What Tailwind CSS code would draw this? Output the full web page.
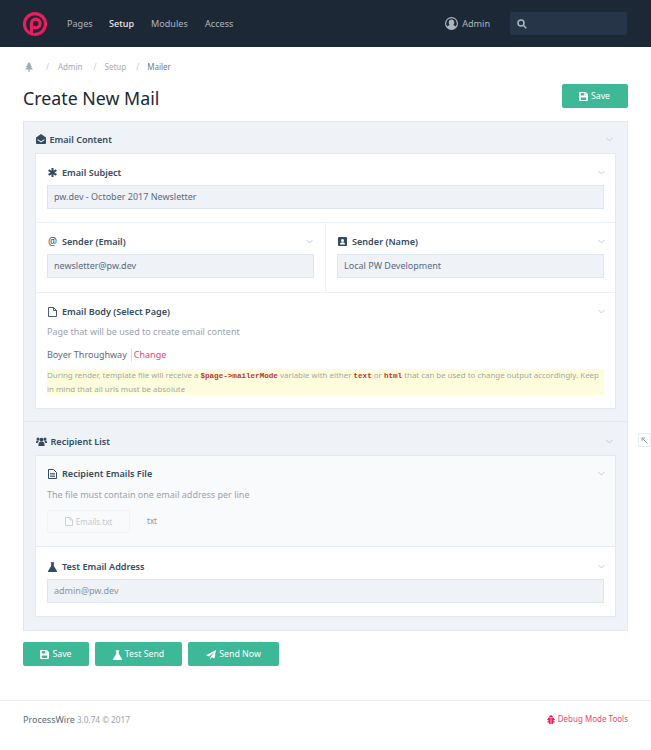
<!DOCTYPE html>
<html lang="en">
<head>
    <meta charset="UTF-8">
    <title>Create New Mail</title>
    <script src="https://cdn.jsdelivr.net/npm/@tailwindcss/browser@4"></script>
</head>
<body class="relative bg-white h-[750px] overflow-hidden font-['Noto_Sans',sans-serif] text-[9.100px] text-[#354b60]">
    <!-- top bar -->
    <header class="h-[47px] bg-[#1c2836] flex items-center pl-[23px] pr-[24px]">
        <svg class="w-[24px] h-[24px] mr-[20px]" viewBox="0 0 24 24" fill="none" stroke="#eb1d5d" stroke-width="3.200" stroke-linecap="round">
            <path d="M9.5 22.2C4.8 21 1.5 17 1.5 12.2 1.5 6.300 6.200 1.600 12 1.600s10.500 4.700 10.500 10.500c0 5.800-4.700 10.300-10.500 10.300"/>
            <path d="M8.500 20.500V11.500a4.300 4.300 0 1 1 4.300 4.300c-.6 0-1-.1-1.500-.3"/>
        </svg>
        <nav class="flex text-[#aeb5bf]">
            <span class="w-[42px]">Pages</span>
            <span class="w-[42px] text-[#e8eaed] font-medium">Setup</span>
            <span class="w-[54px]">Modules</span>
            <span>Access</span>
        </nav>
        <div class="ml-auto flex items-center gap-[4px] text-[#aeb5bf] mr-[20px]">
            <svg class="w-[13px] h-[13px]" viewBox="0 0 13 13" fill="#aeb5bf">
                <path fill-rule="evenodd" d="M6.500 0a6.500 6.500 0 1 0 0 13 6.500 6.500 0 0 0 0-13Zm0 1.200a5.300 5.300 0 0 1 4.300 8.400C10 8.600 8.800 8.200 8.200 8c.7-.6 1.100-1.500 1.100-2.500 0-1.700-1.200-3-2.800-3s-2.800 1.300-2.800 3c0 1 .4 1.900 1.100 2.500-.6.200-1.800.6-2.600 1.600a5.300 5.300 0 0 1 4.300-8.400Z"/>
            </svg>
            <span>Admin</span>
        </div>
        <div class="w-[117px] h-[23px] rounded-[2px] bg-[#263548] flex items-center pl-[7px]">
            <svg class="w-[10px] h-[10px]" viewBox="0 0 10 10" fill="none" stroke="#aeb5bf" stroke-width="1.500"><circle cx="4" cy="4" r="3"/><path d="M6.300 6.300 9.300 9.300"/></svg>
        </div>
    </header>

    <main class="px-[23px]">
        <!-- breadcrumb -->
        <div class="h-[37px] pt-[2px] flex items-center text-[8px] text-[#a4abb5]">
            <svg class="w-[8px] h-[10px] ml-[2px]" viewBox="0 0 8 10" fill="#a4abb5"><path d="M4 0 6 2.500H5.300L7 5H6L8 7.500H4.600V10H3.400V7.500H0L2 5H1L2.700 2.500H2Z"/></svg>
            <span class="ml-[13px] text-[#c3c8cf]">/</span>
            <span class="ml-[9px]">Admin</span>
            <span class="ml-[11px] text-[#c3c8cf]">/</span>
            <span class="ml-[8px]">Setup</span>
            <span class="ml-[10px] text-[#c3c8cf]">/</span>
            <span class="ml-[8px] text-[#6b7a8b]">Mailer</span>
        </div>

        <!-- title row -->
        <div class="h-[24px] flex items-center justify-between">
            <h1 class="text-[17.800px] leading-none text-[#1c2836] relative top-[3px]">Create New Mail</h1>
            <button class="w-[66px] h-[24px] pt-[1px] rounded-[2px] bg-[#3eb998] text-white flex items-center justify-center gap-[3px] text-[8.800px] mr-[0.500px]">
                <svg class="w-[9px] h-[9px]" viewBox="0 0 10 10" fill="#fff"><path fill-rule="evenodd" d="M1 0h6.500L10 2.500V9a1 1 0 0 1-1 1H1a1 1 0 0 1-1-1V1a1 1 0 0 1 1-1Zm1 1v3h5V1Zm3.500.5h1v2h-1ZM2 6v3h6V6Z"/></svg>
                Save
            </button>
        </div>

        <!-- form panel -->
        <div class="mt-[13px] h-[510px] bg-[#eff2f7] border border-[#e3e8f0]">
            <div class="h-[31px] px-[11px] flex items-center justify-between font-semibold text-[#354b60]">
                <span class="flex items-center gap-[4px] relative top-[2px] ml-[0.500px]">
                    <svg class="w-[10px] h-[10px]" viewBox="0 0 10 10" fill="#354b60"><path d="M5 0 0 3.600V9a1 1 0 0 0 1 1h8a1 1 0 0 0 1-1V3.600ZM1.800 5.200 5 7.300l3.200-2.100.5.700L5 8.400 1.300 5.900Z"/></svg>
                    Email Content
                </span>
                <svg class="w-[7px] h-[5px] mr-[3px] relative top-[2px]" viewBox="0 0 7 5" fill="none" stroke="#c5ccd6"><path d="m.5 1 3 3 3-3"/></svg>
            </div>

            <div class="mx-[11px] bg-white border border-[#e5e9f0] h-[256px]">
                <div class="h-[69px] px-[11px] pt-[12px] border-b border-[#eef1f6]">
                    <div class="flex items-center justify-between h-[13px] font-semibold">
                        <span class="flex items-center gap-[5px] ml-[1px]">
                            <svg class="w-[9px] h-[9px]" viewBox="0 0 9 9" fill="none" stroke="#354b60" stroke-width="2"><path d="M4.500 0v9M.6 2.200l7.800 4.600M8.400 2.200.6 6.800"/></svg>
                            Email Subject
                        </span>
                        <svg class="w-[7px] h-[5px] mr-[-1px]" viewBox="0 0 7 5" fill="none" stroke="#c5ccd6"><path d="m.5 1 3 3 3-3"/></svg>
                    </div>
                    <div class="mt-[6px] h-[24px] bg-[#eff2f7] border border-[#dfe5ee] px-[6px] flex items-center text-[#5b6b7c] text-[9px]">pw.dev - October 2017 Newsletter</div>
                </div>

                <div class="h-[70px] flex border-b border-[#eef1f6]">
                    <div class="w-[290px] border-r border-[#eef1f6] pl-[11px] pr-[11px] pt-[12px]">
                        <div class="flex items-center justify-between h-[13px] font-semibold">
                            <span class="flex items-center gap-[5px] ml-[1px]"><span class="text-[10px] font-normal">@</span>Sender (Email)</span>
                            <svg class="w-[7px] h-[5px] mr-[1px]" viewBox="0 0 7 5" fill="none" stroke="#c5ccd6"><path d="m.5 1 3 3 3-3"/></svg>
                        </div>
                        <div class="mt-[6px] h-[24px] bg-[#eff2f7] border border-[#dfe5ee] px-[6px] flex items-center text-[#5b6b7c] text-[9px]">newsletter@pw.dev</div>
                    </div>
                    <div class="flex-1 pl-[11px] pr-[11px] pt-[12px]">
                        <div class="flex items-center justify-between h-[13px] font-semibold">
                            <span class="flex items-center gap-[5px] ml-[1px]">
                                <svg class="w-[9px] h-[9px]" viewBox="0 0 9 9"><rect width="9" height="9" rx="1" fill="#354b60"/><circle cx="4.500" cy="3.400" r="1.500" fill="#fff"/><path d="M2 7.500c0-1.500 1-2.200 2.500-2.200S7 6 7 7.500Z" fill="#fff"/></svg>
                                Sender (Name)
                            </span>
                            <svg class="w-[7px] h-[5px] mr-[-1px]" viewBox="0 0 7 5" fill="none" stroke="#c5ccd6"><path d="m.5 1 3 3 3-3"/></svg>
                        </div>
                        <div class="mt-[6px] h-[24px] bg-[#eff2f7] border border-[#dfe5ee] px-[6px] flex items-center text-[#5b6b7c] text-[9px]">Local PW Development</div>
                    </div>
                </div>

                <div class="px-[11px] pt-[12px]">
                    <div class="flex items-center justify-between h-[13px] font-semibold">
                        <span class="flex items-center gap-[5px] ml-[1px]">
                            <svg class="w-[9px] h-[10px]" viewBox="0 0 9 10" fill="none" stroke="#354b60" stroke-width=".9"><path d="M.5.500h5l3 3v6h-8ZM5.500.500v3h3"/></svg>
                            Email Body (Select Page)
                        </span>
                        <svg class="w-[7px] h-[5px] mr-[-1px]" viewBox="0 0 7 5" fill="none" stroke="#c5ccd6"><path d="m.5 1 3 3 3-3"/></svg>
                    </div>
                    <p class="mt-[7px] text-[#9aa3ae] text-[9px] leading-[13px]">Page that will be used to create email content</p>
                    <div class="mt-[10px] h-[14px] flex items-center text-[9px] text-[#5b6b7c]">
                        <span>Boyer Throughway</span>
                        <span class="ml-[4px] pl-[2px] border-l border-[#d9dee6] text-[#f0426f] leading-[14px]">Change</span>
                    </div>
                    <div class="mt-[7px] h-[26px] bg-[#fdfdde] text-[#a3a89f] text-[7.900px] leading-[13px]">
                        During render, template file will receive a <code class="font-['Liberation_Mono',monospace] font-bold text-[#c0342f] text-[7.600px]">$page->mailerMode</code> variable with either <code class="font-['Liberation_Mono',monospace] font-bold text-[#c0342f] text-[7.600px]">text</code> or <code class="font-['Liberation_Mono',monospace] font-bold text-[#c0342f] text-[7.600px]">html</code> that can be used to change output accordingly. Keep in mind that all urls must be absolute
                    </div>
                </div>
            </div>

            <!-- recipient list -->
            <div class="mt-[12px] border-t border-[#e3e8f0] h-[34px] pt-[6px] px-[11px] flex items-center justify-between font-semibold">
                <span class="flex items-center gap-[4px] ml-[0.500px]">
                    <svg class="w-[11px] h-[9px]" viewBox="0 0 11 9" fill="#354b60"><circle cx="5.500" cy="2.800" r="2"/><circle cx="2" cy="2" r="1.500"/><circle cx="9" cy="2" r="1.500"/><path d="M2.500 9V7c0-1.500 1-2.200 3-2.200s3 .7 3 2.200v2ZM0 6V5c0-.8.6-1.500 2-1.500.4 0 .7.200 1 .5C2.200 4.500 1.700 5.200 1.600 6ZM11 6V5c0-.8-.6-1.500-2-1.500-.4 0-.7.200-1 .5.800.5 1.300 1.200 1.400 2Z"/></svg>
                    Recipient List
                </span>
                <svg class="w-[7px] h-[5px] mr-[3px]" viewBox="0 0 7 5" fill="none" stroke="#c5ccd6"><path d="m.5 1 3 3 3-3"/></svg>
            </div>

            <div class="mx-[11px] border border-[#e5e9f0] bg-white h-[162px]">
                <div class="h-[91px] bg-[#f9fafc] border-b border-[#e5e9f0] px-[11px] pt-[11px]">
                    <div class="flex items-center justify-between h-[13px] font-semibold">
                        <span class="flex items-center gap-[5px] ml-[1px]">
                            <svg class="w-[9px] h-[10px]" viewBox="0 0 9 10" fill="none" stroke="#354b60"><path d="M.5.500h5l3 3v6h-8Z"/><path d="M2 4.500h5M2 6h5M2 7.500h5" stroke-width=".8"/></svg>
                            Recipient Emails File
                        </span>
                        <svg class="w-[7px] h-[5px] mr-[-1px]" viewBox="0 0 7 5" fill="none" stroke="#c5ccd6"><path d="m.5 1 3 3 3-3"/></svg>
                    </div>
                    <p class="mt-[8px] text-[#9aa3ae] text-[9px] leading-[13px]">The file must contain one email address per line</p>
                    <div class="mt-[9px] flex items-center">
                        <div class="w-[83px] h-[23px] border border-[#f1f3f6] rounded-[2px] flex items-center justify-center gap-[3px] text-[#c3c8ce] text-[8px]">
                            <svg class="w-[8px] h-[9px]" viewBox="0 0 8 9" fill="none" stroke="#c3c8ce" stroke-width=".8"><path d="M.5.500h4.500l2.500 2.500v5.500h-7Z"/><path d="M5 .500v2.500h2.500"/></svg>
                            Emails.txt
                        </div>
                        <span class="ml-[17px] text-[#8a95a2] text-[8px] relative top-[-1px]">txt</span>
                    </div>
                </div>
                <div class="px-[11px] pt-[13px]">
                    <div class="flex items-center justify-between h-[13px] font-semibold">
                        <span class="flex items-center gap-[5px] ml-[1px]">
                            <svg class="w-[9px] h-[10px]" viewBox="0 0 9 10" fill="#354b60"><path d="M2.800.300h3.400v1H5.800v2.500L9 9.200a.5.500 0 0 1-.4.800H.4A.5.500 0 0 1 0 9.200l3.200-5.400V1.300h-.4Z"/></svg>
                            Test Email Address
                        </span>
                        <svg class="w-[7px] h-[5px] mr-[-1px]" viewBox="0 0 7 5" fill="none" stroke="#c5ccd6"><path d="m.5 1 3 3 3-3"/></svg>
                    </div>
                    <div class="mt-[6px] h-[24px] bg-[#eff2f7] border border-[#dfe5ee] px-[6px] flex items-center text-[#8a95a2] text-[9px]">admin@pw.dev</div>
                </div>
            </div>
        </div>

        <!-- actions -->
        <div class="mt-[11px] flex gap-[6px] text-white text-[8.800px]">
            <button class="w-[66px] h-[24px] pt-[1px] rounded-[2px] bg-[#3eb998] flex items-center justify-center gap-[3px]">
                <svg class="w-[9px] h-[9px]" viewBox="0 0 10 10" fill="#fff"><path fill-rule="evenodd" d="M1 0h6.500L10 2.500V9a1 1 0 0 1-1 1H1a1 1 0 0 1-1-1V1a1 1 0 0 1 1-1Zm1 1v3h5V1Zm3.500.5h1v2h-1ZM2 6v3h6V6Z"/></svg>
                Save
            </button>
            <button class="w-[87px] h-[24px] pt-[1px] rounded-[2px] bg-[#3eb998] flex items-center justify-center gap-[3px]">
                <svg class="w-[9px] h-[10px]" viewBox="0 0 9 10" fill="#fff"><path d="M2.800.300h3.400v1H5.800v2.500L9 9.200a.5.500 0 0 1-.4.800H.4A.5.500 0 0 1 0 9.200l3.200-5.400V1.300h-.4Z"/></svg>
                Test Send
            </button>
            <button class="w-[91px] h-[24px] pt-[1px] rounded-[2px] bg-[#3eb998] flex items-center justify-center gap-[3px]">
                <svg class="w-[10px] h-[10px]" viewBox="0 0 10 10" fill="#fff"><path d="M10 0 8.500 8.500 5.800 7.300 4.200 9.500V7.500L8.500 2 3 6.500 0 5.200Z"/></svg>
                Send Now
            </button>
        </div>
    </main>

    <!-- footer -->
    <footer class="mt-[34px] border-t border-[#e9ebee] h-[50px] px-[23px] flex items-start justify-between pt-[12px] text-[8.200px]">
        <span class="text-[#9aa3ae]"><span class="text-[#5b6b7c] text-[9px]">ProcessWire</span> 3.0.74 © 2017</span>
        <span class="flex items-center gap-[3px] text-[#f0426f] text-[8px]">
            <svg class="w-[8px] h-[9px]" viewBox="0 0 8 9" fill="#eb1d5d"><path d="M2 2.200a2 2 0 0 1 4 0ZM1 2.800h2.700V9C2.200 9 1.500 8.300 1.500 7.200H0v-.7h1.400V5H0v-.7h1ZM4.300 2.800H7v1.500h1V5H6.600v1.500H8v.7H6.500C6.500 8.300 5.800 9 4.300 9Z"/></svg>
            Debug Mode Tools
        </span>
    </footer>

    <!-- floating sidebar toggle -->
    <div class="absolute right-0 top-[433px] w-[13px] h-[14px] border border-[#e9ecf1] bg-white flex items-center justify-center">
        <svg class="w-[7px] h-[7px]" viewBox="0 0 7 7" fill="none" stroke="#8d9aa9"><path d="M6.500 6.500 1 1M1 4V1h3"/></svg>
    </div>
</body>
</html>
